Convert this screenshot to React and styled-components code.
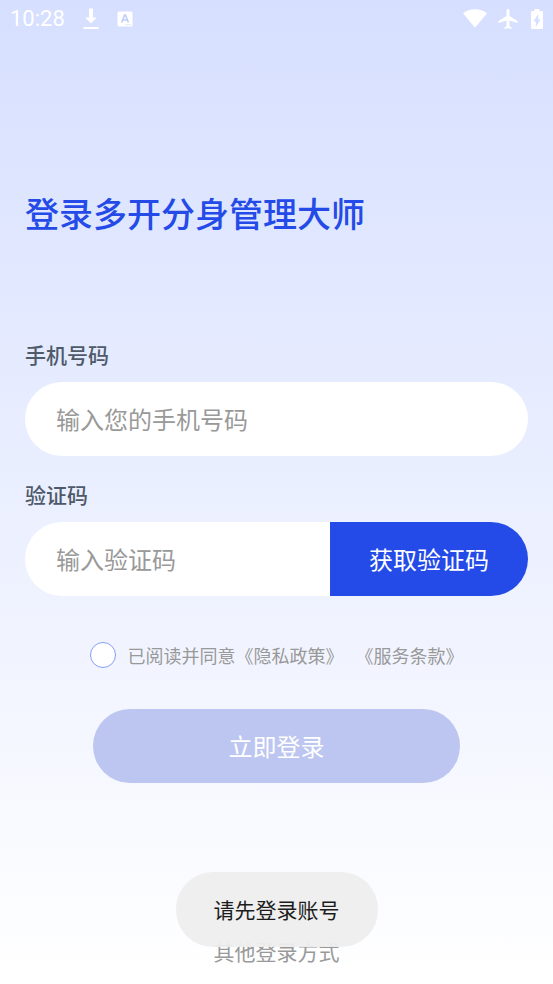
import React, { useState } from "react";
import styled, { createGlobalStyle } from "styled-components";

const GlobalStyle = createGlobalStyle`
  body {
    margin: 0;
    background: #fff;
    font-family: "Noto Sans CJK SC", sans-serif;
  }
  button,
  input {
    font: inherit;
  }
`;

const Screen = styled.div`
  display: flex;
  flex-direction: column;
  box-sizing: border-box;
  min-height: 100vh;
  background: linear-gradient(180deg, #d6dfff 0%, #fff 100%);
`;

const StatusBar = styled.header`
  display: flex;
  align-items: center;
  justify-content: space-between;
  height: 37px;
  padding: 0 10px;
  color: #fff;
`;

const StatusGroup = styled.div`
  display: flex;
  align-items: center;
  gap: ${(p) => p.$gap}px;
`;

const Clock = styled.time`
  font-family: Roboto, sans-serif;
  font-size: 22px;
  line-height: 38px;
`;

const Content = styled.main`
  display: flex;
  flex-direction: column;
  padding: 0 25px;
`;

const Title = styled.h1`
  margin: 151px 0 101px;
  font-size: 34px;
  font-weight: 500;
  line-height: 50px;
  color: #244be8;
`;

const Field = styled.div`
  display: flex;
  flex-direction: column;
  gap: 12px;
  margin-bottom: 23px;
`;

const Label = styled.label`
  font-size: 21px;
  font-weight: 500;
  line-height: 31px;
  color: #4e5969;
`;

const InputRow = styled.div`
  display: flex;
  height: 74px;
  border-radius: 37px;
  background: #fff;
  overflow: hidden;
`;

const TextInput = styled.input`
  flex: 1;
  min-width: 0;
  padding: 0 31px 2px;
  border: none;
  outline: none;
  background: transparent;
  font-size: 24px;
  color: #333;
  &::placeholder {
    color: #999;
    opacity: 1;
  }
`;

const CodeButton = styled.button`
  padding: 0 39px;
  border: none;
  background: #244be8;
  font-size: 24px;
  line-height: 36px;
  color: #fff;
  cursor: pointer;
`;

const Agreement = styled.div`
  display: flex;
  align-items: center;
  justify-content: center;
  gap: 12px;
  margin: 22px 0 40px;
  font-size: 18px;
  line-height: 28px;
  color: #999;
`;

const Check = styled.input`
  appearance: none;
  box-sizing: border-box;
  width: 26px;
  height: 26px;
  margin: 0;
  border: 1px solid #879ff5;
  border-radius: 50%;
  background: #fff;
  &:checked {
    background: #244be8;
    box-shadow: inset 0 0 0 5px #fff;
  }
`;

const Terms = styled.span`
  display: flex;
  gap: 12px;
`;

const PolicyLink = styled.a`
  color: inherit;
  text-decoration: none;
`;

const LoginButton = styled.button`
  align-self: center;
  width: 73%;
  height: 74px;
  border: none;
  border-radius: 37px;
  background: #bcc6f0;
  font-size: 24px;
  line-height: 36px;
  color: #fff;
`;

const Footer = styled.footer`
  position: relative;
  margin-top: auto;
  padding-bottom: 17px;
  text-align: center;
  font-size: 21px;
  line-height: 32px;
  color: #999;
`;

const Toast = styled.div`
  position: absolute;
  left: 50%;
  bottom: 37px;
  transform: translateX(-50%);
  padding: 22px 38px;
  border-radius: 37px;
  background: rgba(238, 238, 238, 0.94);
  line-height: 31px;
  white-space: nowrap;
  color: #1c1c1c;
`;

function DownloadIcon() {
  return (
    <svg width="16" height="22" viewBox="0 0 16 22" fill="#fff">
      <path d="M6 .5h4v9h3.800L8 15.500 2.200 9.500H6zM.4 19h15.200v2H.4z" />
    </svg>
  );
}

function InputMethodIcon() {
  return (
    <svg width="16" height="16" viewBox="0 0 16 16">
      <rect x=".5" y=".5" width="15" height="15" rx="1.500" fill="#fff" />
      <path
        d="M4.600 11.500 7.600 4h.8l3 7.500M5.700 9h4.600"
        fill="none"
        stroke="#c3cef8"
        strokeWidth="1.700"
      />
      <path d="M8.500 13.700h5" stroke="#c3cef8" strokeDasharray="1 1" />
    </svg>
  );
}

function WifiIcon() {
  return (
    <svg width="24" height="19" viewBox="0 0 24 19" fill="#fff">
      <path d="M12 18.700 0 4.300C3.300 1.700 7.500.3 12 .3s8.700 1.400 12 4z" />
    </svg>
  );
}

function PlaneIcon() {
  return (
    <svg width="22" height="20" viewBox="2 2 21 20" fill="#fff">
      <path d="M21 16v-2l-8-5V3.500c0-.83-.67-1.500-1.500-1.500S10 2.670 10 3.500V9l-8 5v2l8-2.500V19l-2 1.500V22l3.500-1 3.500 1v-1.500L13 19v-5.500l8 2.500z" />
    </svg>
  );
}

function BatteryIcon() {
  return (
    <svg width="12" height="20" viewBox="7 2 10 20" preserveAspectRatio="none" fill="#fff">
      <path d="M15.670 4H14V2h-4v2H8.330C7.600 4 7 4.600 7 5.330v15.330C7 21.400 7.600 22 8.330 22h7.330c.74 0 1.340-.6 1.340-1.330V5.330C17 4.600 16.400 4 15.670 4zM11 20v-5.500H9L13 7v5.500h2L11 20z" />
    </svg>
  );
}

function App() {
  const [phone, setPhone] = useState("");
  const [code, setCode] = useState("");
  const [agreed, setAgreed] = useState(false);

  return (
    <>
      <GlobalStyle />
      <Screen>
        <StatusBar>
          <StatusGroup $gap={18}>
            <Clock>10:28</Clock>
            <DownloadIcon />
            <InputMethodIcon />
          </StatusGroup>
          <StatusGroup $gap={11}>
            <WifiIcon />
            <PlaneIcon />
            <BatteryIcon />
          </StatusGroup>
        </StatusBar>
        <Content>
          <Title>登录多开分身管理大师</Title>
          <Field>
            <Label htmlFor="phone">手机号码</Label>
            <InputRow>
              <TextInput
                id="phone"
                type="tel"
                placeholder="输入您的手机号码"
                value={phone}
                onChange={(e) => setPhone(e.target.value)}
              />
            </InputRow>
          </Field>
          <Field>
            <Label htmlFor="code">验证码</Label>
            <InputRow>
              <TextInput
                id="code"
                type="text"
                placeholder="输入验证码"
                value={code}
                onChange={(e) => setCode(e.target.value)}
              />
              <CodeButton type="button">获取验证码</CodeButton>
            </InputRow>
          </Field>
          <Agreement>
            <Check
              id="agree"
              type="checkbox"
              checked={agreed}
              onChange={(e) => setAgreed(e.target.checked)}
            />
            <Terms>
              <span>
                <label htmlFor="agree">已阅读并同意</label>
                <PolicyLink href="#privacy">《隐私政策》</PolicyLink>
              </span>
              <PolicyLink href="#terms">《服务条款》</PolicyLink>
            </Terms>
          </Agreement>
          <LoginButton type="button">立即登录</LoginButton>
        </Content>
        <Footer>
          其他登录方式
          <Toast role="status">请先登录账号</Toast>
        </Footer>
      </Screen>
    </>
  );
}

export default App;
